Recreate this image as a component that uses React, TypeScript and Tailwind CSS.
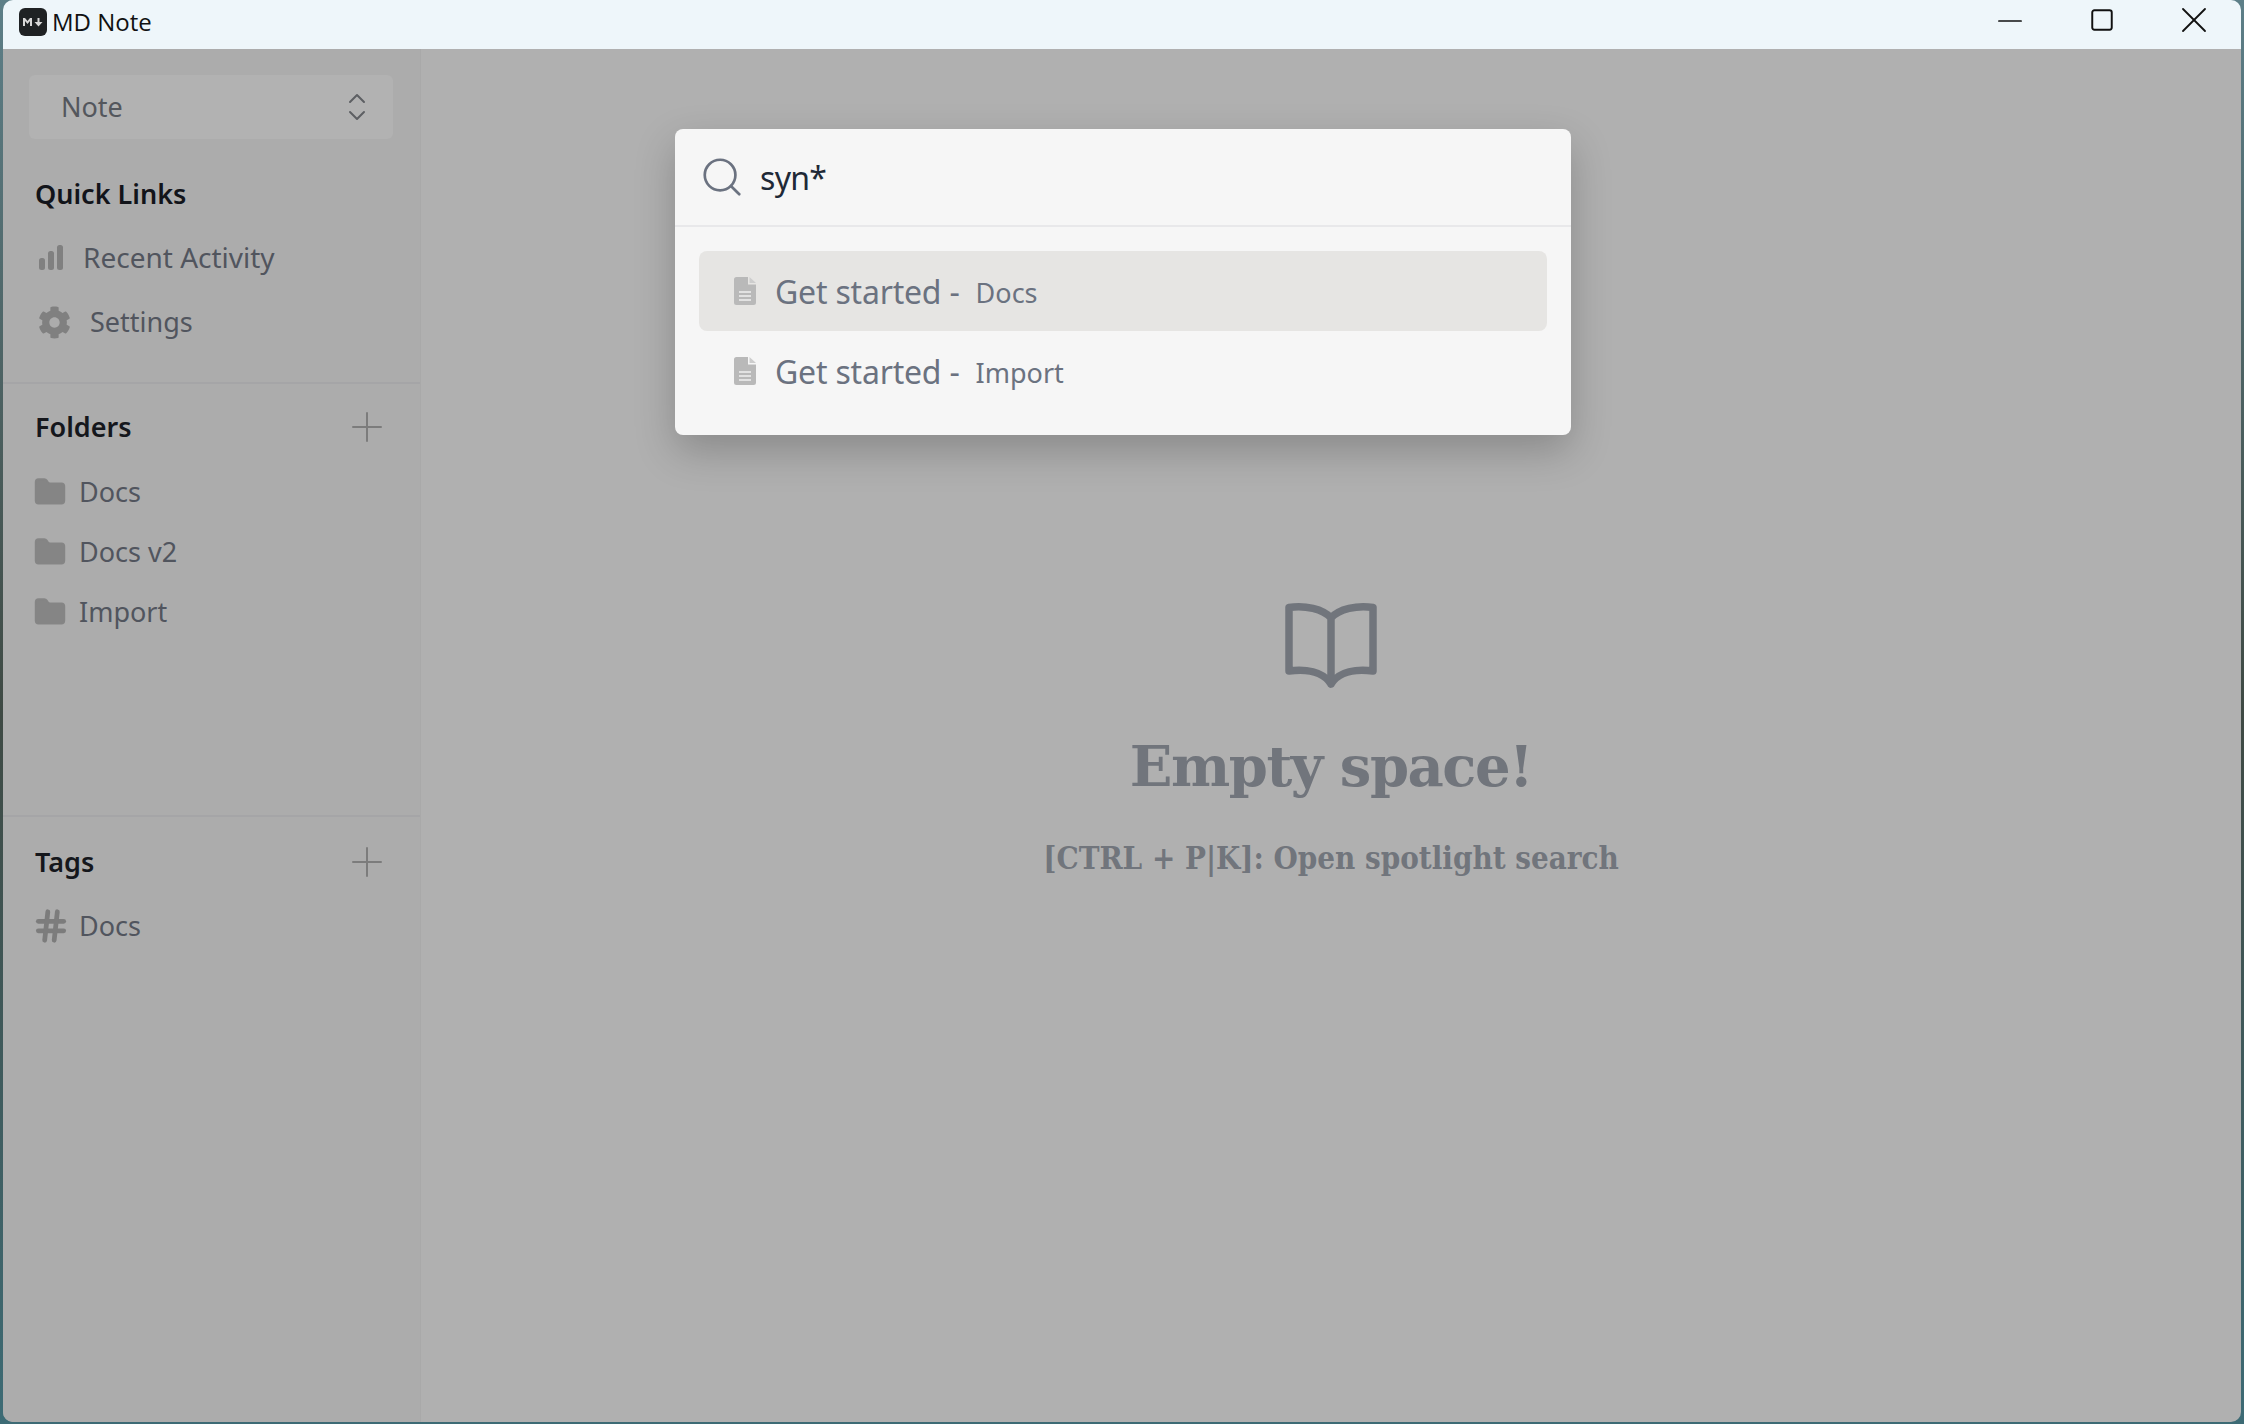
import { Search, Plus, Minus, Square, X, Hash, Folder } from 'lucide-react';
import { FaCog } from 'react-icons/fa';

const folders = ['Docs', 'Docs v2', 'Import'];
const results = [
  { title: 'Get started', folder: 'Docs', active: true },
  { title: 'Get started', folder: 'Import', active: false },
];

const BarsIcon = () => (
  <svg width="26" height="26" viewBox="0 0 26 26" fill="#808080">
    <rect x="1" y="14" width="6" height="12" rx="2.5" />
    <rect x="10" y="7" width="6" height="19" rx="2.5" />
    <rect x="19" y="1" width="6" height="25" rx="2.5" />
  </svg>
);

const FileIcon = () => (
  <svg width="22" height="28" viewBox="0 0 22 28" className="shrink-0">
    <path d="M2.5 0H14v7.5h8V25.5a2.5 2.5 0 0 1-2.5 2.5h-17A2.5 2.5 0 0 1 0 25.5v-23A2.5 2.5 0 0 1 2.5 0z" fill="#b9b9b9" />
    <path d="M15.5 0L22 6h-6.500z" fill="#cdcdcd" />
    <path d="M5 15h12M5 19h12M5 23h12" stroke="#f0f0f0" strokeWidth="1.500" />
  </svg>
);

const MdLogo = () => (
  <svg width="28" height="28" viewBox="0 0 28 28" className="shrink-0">
    <rect width="28" height="28" rx="6" fill="#1f2224" />
    <path d="M4 18v-8h2l2.500 3 2.500-3h2v8h-2v-5l-2.500 3-2.500-3v5z" fill="#d8d8d8" />
    <path d="M18.500 10h2v4h3l-4 4.500-4-4.500h3z" fill="#d8d8d8" />
  </svg>
);

const UpDownIcon = () => (
  <svg width="18" height="28" viewBox="0 0 18 28" fill="none" stroke="#5d5f63" strokeWidth="2" strokeLinecap="round" strokeLinejoin="round">
    <path d="M2 9l7-7 7 7" />
    <path d="M2 19l7 7 7-7" />
  </svg>
);

const BookIcon = () => (
  <svg width="92" height="87" viewBox="0 0 92 87" fill="none" stroke="#71757c" strokeWidth="7.500" strokeLinejoin="round" strokeLinecap="round">
    <path d="M46 16C38 7 20 3 4 5.500V69C20 67 38 69 46 82C54 69 72 67 88 69V5.500C72 3 54 7 46 16V82" />
  </svg>
);

const SectionHeader = ({ label }: { label: string }) => (
  <div className="flex h-[36px] items-center justify-between pr-[29px]">
    <span className="text-[27px] font-semibold leading-[36px] text-[#15171c]">{label}</span>
    <Plus size={48} strokeWidth={1} className="text-[#7c7c7c]" />
  </div>
);

const App = () => {
  return (
    <div className="relative flex h-[1424px] w-[2244px] flex-col overflow-hidden bg-gradient-to-b from-[#5d7f88] via-[#3f4a44] to-[#3d6b75] pb-[2px] pl-[3px] pr-[3px] font-['Noto_Sans',sans-serif]">
      {/* title bar */}
      <header className="flex h-[49px] shrink-0 items-center justify-between rounded-t-[10px] bg-[#eef6fa] pl-[16px]">
        <div className="flex items-center gap-[5px] pb-[6px]">
          <MdLogo />
          <span className="font-['Open_Sans',sans-serif] text-[24px] leading-[30px] text-[#111]">MD Note</span>
        </div>
        <div className="flex items-center pb-[9px] pr-[1px]">
          <div className="flex w-[92px] justify-center pt-[1px]">
            <Minus size={38} strokeWidth={1.1} className="text-[#111]" />
          </div>
          <div className="flex w-[92px] justify-center">
            <Square size={26} strokeWidth={1.8} className="text-[#111]" />
          </div>
          <div className="flex w-[92px] justify-center">
            <X size={44} strokeWidth={1} className="text-[#111]" />
          </div>
        </div>
      </header>

      <div className="flex min-h-0 flex-1 overflow-hidden rounded-b-[10px] bg-[#b0b0b0]">
        {/* sidebar */}
        <aside className="flex w-[418px] shrink-0 flex-col border-r border-[#a9a9a9] bg-[#acacac]">
          <div className="h-[335px] shrink-0 border-b-2 border-[#a5a5a7] pl-[26px] pt-[26px]">
            <div className="flex h-[64px] w-[364px] items-center justify-between rounded-md bg-[#b2b2b2] pl-[32px] pr-[27px]">
              <span className="pt-[1px] text-[27px] text-[#54575d]">Note</span>
              <UpDownIcon />
            </div>
            <div className="mt-[36px] pl-[6px] text-[27px] font-semibold leading-[38px] text-[#12141a]">Quick Links</div>
            <div className="mt-[25px] flex h-[38px] items-center gap-[19px] pl-[9px]">
              <BarsIcon />
              <span className="text-[28px] text-[#51555e]">Recent Activity</span>
            </div>
            <div className="mt-[27px] flex h-[38px] items-center gap-[19px] pl-[9px]">
              <FaCog size={33} className="text-[#808080]" />
              <span className="text-[27px] text-[#51555e]">Settings</span>
            </div>
          </div>

          <div className="h-[433px] shrink-0 border-b-2 border-[#a5a5a7] pl-[32px] pt-[25px]">
            <SectionHeader label="Folders" />
            <div className="mt-[29px] flex flex-col gap-[24px]">
              {folders.map((name) => (
                <div key={name} className="flex h-[36px] items-center gap-[12px]">
                  <Folder size={34} fill="#858585" strokeWidth={1.5} className="-ml-[2px] text-[#858585]" />
                  <span className="text-[27px] text-[#51555e]">{name}</span>
                </div>
              ))}
            </div>
          </div>

          <div className="flex-1 pl-[32px] pt-[27px]">
            <SectionHeader label="Tags" />
            <div className="mt-[28px] flex h-[36px] items-center gap-[9px]">
              <Hash size={38} strokeWidth={3} className="-ml-[3px] text-[#7c7c7c]" />
              <span className="text-[27px] text-[#51555e]">Docs</span>
            </div>
          </div>
        </aside>

        {/* empty state */}
        <main className="flex flex-1 flex-col items-center pt-[553px]">
          <BookIcon />
          <h1 className="mt-[40px] font-['DejaVu_Serif',serif] text-[56px] font-bold leading-[74px] tracking-[-1.5px] text-[#71757c]">Empty space!</h1>
          <p className="mt-[33px] font-['DejaVu_Serif_Condensed','DejaVu_Serif',serif] text-[31px] font-bold leading-[44px] text-[#71757c]">[CTRL + P|K]: Open spotlight search</p>
        </main>
      </div>

      {/* spotlight dialog */}
      <div className="absolute left-[675px] top-[129px] w-[896px] rounded-lg bg-[#f6f6f6] shadow-[0_16px_40px_rgba(0,0,0,0.22)]">
        <div className="flex h-[98px] items-center gap-[15px] border-b-2 border-[#e8e8ea] pl-[24px]">
          <Search size={46} strokeWidth={1.4} className="text-[#6b7280]" />
          <span className="pt-[1px] text-[32px] tracking-[-0.7px] text-[#1f2937]">syn*</span>
        </div>
        <div className="flex flex-col p-[24px]">
          {results.map((r) => (
            <div
              key={r.folder}
              className={r.active ? 'flex h-[80px] items-center rounded-lg bg-[#e6e5e3] pl-[35px]' : 'flex h-[80px] items-center rounded-lg pl-[35px]'}
            >
              <FileIcon />
              <span className="ml-[19px] pt-[1px] text-[32px] tracking-[-0.2px] text-[#6b7280]">{r.title} -</span>
              <span className="ml-[16px] mt-[5px] text-[27px] text-[#6b7280]">{r.folder}</span>
            </div>
          ))}
        </div>
      </div>
    </div>
  );
};

export default App;
